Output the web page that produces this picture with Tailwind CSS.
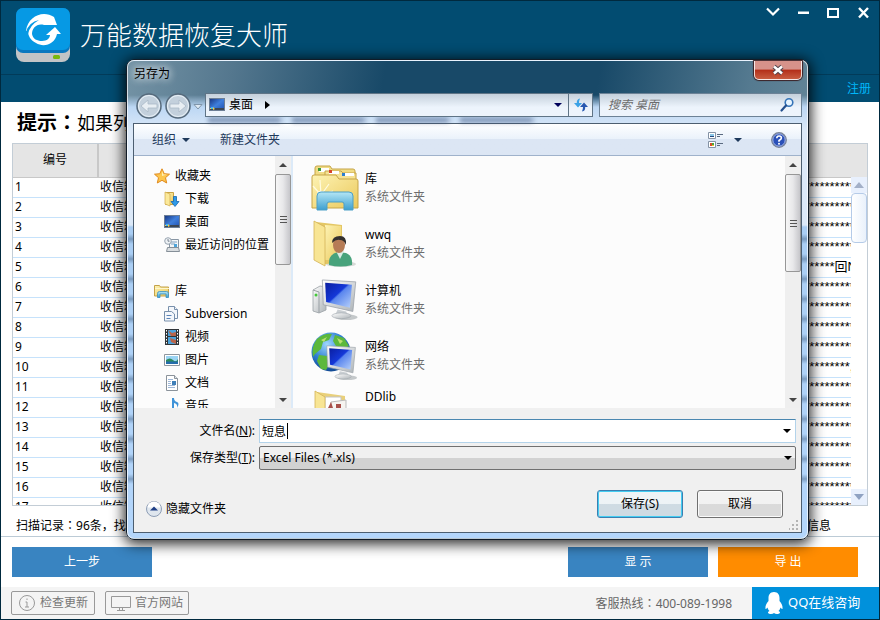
<!DOCTYPE html>
<html lang="zh-CN">
<head>
    <meta charset="UTF-8">
    <meta name="viewport" content="width=device-width, initial-scale=1.0">
    <title>万能数据恢复大师</title>
    <script src="https://cdn.jsdelivr.net/npm/@tailwindcss/browser@4"></script>
</head>
<body class="font-['Noto_Sans','Noto_Sans_CJK_SC',sans-serif] text-xs text-black bg-white">
    <!-- Shared icons -->
    <svg class="absolute h-0 w-0">
        <defs>
            <linearGradient id="gYellow" x1="0" y1="0" x2="1" y2="1"><stop offset="0" stop-color="#fdf3b4"/><stop offset="1" stop-color="#ebc95c"/></linearGradient>
            <linearGradient id="gBlue" x1="0" y1="0" x2="0" y2="1"><stop offset="0" stop-color="#b4e6f5"/><stop offset="1" stop-color="#3c9fd0"/></linearGradient>
            <linearGradient id="gScreen" x1="0" y1="0" x2="1" y2="1"><stop offset="0" stop-color="#0a1ea0"/><stop offset=".45" stop-color="#1438d8"/><stop offset=".5" stop-color="#5a86ee"/><stop offset="1" stop-color="#b8d2fa"/></linearGradient>
            <linearGradient id="gDesk" x1="0" y1="0" x2="1" y2="1"><stop offset="0" stop-color="#16337e"/><stop offset=".5" stop-color="#3f7fdc"/><stop offset="1" stop-color="#1f4fae"/></linearGradient>
            <linearGradient id="gSilver" x1="0" y1="0" x2="1" y2="1"><stop offset="0" stop-color="#ffffff"/><stop offset="1" stop-color="#aeb4b8"/></linearGradient>
            <radialGradient id="gGlobe" cx=".4" cy=".3" r=".7"><stop offset="0" stop-color="#9fd8ff"/><stop offset=".6" stop-color="#2c7cd0"/><stop offset="1" stop-color="#124a94"/></radialGradient>
            <symbol id="desktop" viewBox="0 0 16 14">
                <rect x=".5" y=".5" width="15" height="12" fill="url(#gDesk)" stroke="#6d7f96"/>
                <path d="M1 10h14v2H1z" fill="#3b4654"/>
                <path d="M1 10h2v1H1zM4 9l2 2-2 1z" fill="#f2d04a"/><path d="M2 9h2v2H2z" fill="#44b7f0"/>
            </symbol>
            <symbol id="monitor" viewBox="0 0 38 44">
                <ellipse cx="26" cy="40" rx="12" ry="3" fill="#c4c8ca"/>
                <path d="M17 32l9 2 2 5q-6 3-14 0z" fill="#c9ced2"/>
                <ellipse cx="21" cy="38.500" rx="10" ry="3" fill="url(#gSilver)" stroke="#9da4aa" stroke-width=".6"/>
                <path d="M1 1l35 2-3 31L2 27z" fill="url(#gSilver)" stroke="#9aa1a8" stroke-width=".8"/>
                <path d="M4 4l28 2-2 24L5 24z" fill="url(#gScreen)"/>
            </symbol>
        </defs>
    </svg>

    <div class="relative flex h-screen flex-col overflow-hidden border border-[#00293e]">
        <!-- Title bar -->
        <header class="shrink-0 bg-[#024c71] text-white">
            <div class="flex h-[74px] justify-between border-b border-[#023b59]">
                <div class="flex items-center gap-2.5 pb-1.5 pl-[15px]">
                    <svg class="h-[54px] w-[54px]" viewBox="0 0 54 54">
                        <rect y="8" width="54" height="46" rx="8" fill="#c2c4c6"/>
                        <rect width="54" height="45" rx="7" fill="#0a78bf"/>
                        <rect width="54" height="42" rx="7" fill="#0699e4"/>
                        <rect x="37" y="47" width="7" height="4" rx="1.500" fill="#77b80e"/>
                        <path d="M10 23C12 8 27 2 38 9l3 8H28c-7-2-12 3-12 9 1 5 5 7 10 7 5 0 8-3 8-6h-4l9-8 6 7h-4c-2 10-13 14-21 9-6-3-8-8-8-12z" fill="#fff"/>
                        <path d="M10 24q3-10 13-12-9 5-11 14z" fill="#0699e4"/>
                    </svg>
                    <h1 class="text-[26px] font-light leading-8">万能数据恢复大师</h1>
                </div>
                <div class="flex h-6 gap-3.5 pr-2">
                    <button type="button" aria-label="菜单" class="w-4"><svg class="h-6 w-4" viewBox="0 0 16 24" fill="none" stroke="#fff" stroke-width="2.200"><path d="M2 7.500l6 6 6-6"/></svg></button>
                    <button type="button" aria-label="最小化" class="w-4"><svg class="h-6 w-4" viewBox="0 0 16 24"><path d="M3 10.500h11V13H3z" fill="#fff"/></svg></button>
                    <button type="button" aria-label="最大化" class="w-4"><svg class="h-6 w-4" viewBox="0 0 16 24" fill="none" stroke="#fff" stroke-width="2"><rect x="3" y="8" width="10" height="8"/></svg></button>
                    <button type="button" aria-label="关闭" class="w-4"><svg class="h-6 w-4" viewBox="0 0 16 24" fill="none" stroke="#fff" stroke-width="2.400"><path d="M4 7l9 9.500M13 7l-9 9.500"/></svg></button>
                </div>
            </div>
            <div class="flex h-[27px] items-center justify-end pr-2">
                <a href="#" class="text-[#00b7fa]">注册</a>
            </div>
        </header>

        <!-- Scan results -->
        <main class="flex min-h-0 flex-1 flex-col">
            <p class="flex h-[41px] shrink-0 items-center overflow-hidden whitespace-nowrap pl-4 text-lg leading-6"><b class="text-xl">提示<span class="font-['Noto_Sans_CJK_TC']" lang="zh-TW">：</span></b>如果列表中</p>
            <div class="relative mx-[11px] min-h-0 flex-1 overflow-hidden border border-[#c3cdd6]">
                <table class="w-full table-fixed border-collapse">
                    <thead>
                        <tr class="h-[33px] border-b border-[#c8c8c8] bg-[#e5e5e5]">
                            <th class="w-[85px] border-r-2 border-[#c8c8c8] font-normal">编号</th>
                            <th class="w-[600px] font-normal"></th>
                            <th class="font-normal"></th>
                        </tr>
                    </thead>
                    <tbody id="records"></tbody>
                </table>
                <div class="absolute bottom-0 right-0 top-[33px] flex w-4 flex-col bg-white">
                    <div class="flex h-4 items-center justify-center bg-[#e8f0fd]"><svg class="h-2 w-3" viewBox="0 0 12 8"><path d="M1 7l5-6 5 6z" fill="#a3b0c8"/></svg></div>
                    <div class="h-[50px] rounded-sm border border-[#b5cbe8] bg-linear-to-r from-white to-[#e9f1fb]"></div>
                    <div class="mt-auto flex h-4 items-center justify-center bg-[#e8f0fd]"><svg class="h-2 w-3" viewBox="0 0 12 8"><path d="M1 1l5 6 5-6z" fill="#8fa2c2"/></svg></div>
                </div>
            </div>
            <div class="flex h-[31px] shrink-0 items-end justify-between border-b border-[#bccbd6] pb-0.5 pl-[15px] pr-12 leading-4">
                <span>扫描记录<span class="font-['Noto_Sans_CJK_TC']" lang="zh-TW">：</span>96条，找到</span>
                <span>信息</span>
            </div>
            <div class="flex h-[50px] shrink-0 items-center gap-2.5 pl-[11px] pr-[21px] text-white">
                <button type="button" class="h-[30px] w-[140px] bg-[#3984c1]">上一步</button>
                <button type="button" class="ml-auto h-[30px] w-[140px] bg-[#3984c1]">显 示</button>
                <button type="button" class="h-[30px] w-[140px] bg-[#ff8c00]">导 出</button>
            </div>
        </main>

        <!-- Footer -->
        <footer class="flex h-8 shrink-0 items-center gap-2.5 bg-[#f4f4f4] pl-2.5 text-[#666]">
            <button type="button" class="flex h-6 w-[84px] items-center justify-center gap-1 rounded-xs border border-[#999] text-[#777]">
                <svg class="h-[18px] w-[18px]" viewBox="0 0 18 18" fill="none" stroke="#999"><circle cx="9" cy="9" r="7.500"/><path d="M9 4.500v1.500M7.500 8H9v5M7 13h4"/></svg>
                检查更新
            </button>
            <button type="button" class="flex h-6 w-[84px] items-center justify-center gap-1 rounded-xs border border-[#999] text-[#777]">
                <svg class="h-[18px] w-5" viewBox="0 0 20 18" fill="none" stroke="#999"><path d="M.5 2.500h19v11H.5zM8.500 14v2M11.500 14v2M6 16.500h8"/></svg>
                官方网站
            </button>
            <span class="ml-auto mr-2.5">客服热线<span class="font-['Noto_Sans_CJK_TC']" lang="zh-TW">：</span>400-089-1998</span>
            <a href="#" class="flex h-full w-[127px] items-center gap-1 bg-[#0091dc] pl-3 text-[13px] text-white">
                <svg class="h-[22px] w-5" viewBox="0 0 20 22" fill="#fff"><path d="M10 0C6 0 4.500 3 4.500 6v3C2.500 11 1 14 1.500 17c.8 0 1.400-.7 2-1.500.3 1.500 1 2.500 2 3.500-3 1.500-1 3 1.500 3q2 0 3-1 1 1 3 1c2.500 0 4.500-1.500 1.500-3 1-1 1.700-2 2-3.500.6.800 1.200 1.500 2 1.500.5-3-1-6-3-8V6c0-3-1.500-6-5.500-6z"/></svg>
                QQ在线咨询
            </a>
        </footer>

        <!-- Save As dialog -->
        <section role="dialog" aria-labelledby="dlgTitle" class="absolute left-[125px] right-[70px] top-[58px] rounded-lg border border-[#111c28] bg-[linear-gradient(100deg,#7493a5_0%,#54778e_14%,#184968_34%,#184968_62%,#557a90_82%,#71909f_100%)] shadow-[0_2px_14px_2px_rgba(0,0,0,0.85)]">
            <div class="rounded-[7px] border border-white/70 bg-[linear-gradient(to_bottom,transparent_34px,#bcd7f4_46px,#dce9f8_70px,#dce9f8_164px,#a9cdf3_166px,#b4d6fb_100%)]">
                <div class="bg-[repeating-linear-gradient(to_bottom,transparent_0_5px,rgba(60,90,125,0.45)_10px,transparent_15px_20px)] bg-[size:100%_260px] bg-[position:0_168px] bg-no-repeat px-[5px] pb-[5px]">
                    <div class="flex h-[32px] items-start justify-between">
                        <h2 id="dlgTitle" class="rounded-lg pt-[3px] pl-px leading-5 [text-shadow:0_0_8px_#fff,0_0_8px_#fff]">另存为</h2>
                        <button type="button" aria-label="关闭" class="flex h-[19px] w-12 items-center justify-center rounded-b-[5px] border border-t-0 border-white/80 bg-linear-to-b from-[#d6928a] from-45% via-[#b32d18] via-50% to-[#c85c40] shadow-[0_0_1px_1px_#3b2024]">
                            <svg class="h-3 w-3" viewBox="0 0 12 12"><path d="M2 2.500l8 7M10 2.500l-8 7" stroke="#50444c" stroke-width="4.500"/><path d="M2 2.500l8 7M10 2.500l-8 7" stroke="#fff" stroke-width="2.500"/></svg>
                        </button>
                    </div>

                    <!-- Address bar -->
                    <div class="relative flex h-[30px] items-start">
                        <div class="absolute left-[75px] right-[260px] top-6 h-1.5 bg-[repeating-linear-gradient(to_right,rgba(50,75,120,0.45)_0_70px,transparent_76px_84px)] blur-[2px]"></div>
                        <button type="button" aria-label="后退" class="ml-[3px]"><svg class="h-[26px] w-[26px]" viewBox="0 0 26 26"><circle cx="13" cy="13" r="12" fill="#c3d0dc" stroke="#566a7c" stroke-width="1.500"/><circle cx="13" cy="13" r="10.500" fill="none" stroke="#e9f1f7"/><path d="M5 13l7-6v4h9v4h-9v4z" fill="#e8eef3" stroke="#a9b9c7" stroke-width=".8"/></svg></button>
                        <button type="button" aria-label="前进" class="ml-[3px]"><svg class="h-[26px] w-[26px]" viewBox="0 0 26 26"><circle cx="13" cy="13" r="12" fill="#c3d0dc" stroke="#566a7c" stroke-width="1.500"/><circle cx="13" cy="13" r="10.500" fill="none" stroke="#e9f1f7"/><path d="M21 13l-7-6v4H5v4h9v4z" fill="#e8eef3" stroke="#a9b9c7" stroke-width=".8"/></svg></button>
                        <svg class="mx-0.5 mt-2.5 h-2 w-2.5" viewBox="0 0 10 8"><path d="M1 1.500h8L5 6z" fill="#dfeaf4" stroke="#7f95aa"/></svg>
                        <div class="relative flex h-6 flex-1 items-center border border-[#5f7486] bg-linear-to-b from-[#c4d0db] to-[#edf4fc] to-60% pl-[3px]">
                            <svg class="h-3.5 w-4"><use href="#desktop"/></svg>
                            <span class="ml-1">桌面</span>
                            <svg class="ml-3 h-2 w-1.5" viewBox="0 0 6 8"><path d="M0 0l5 4-5 4z"/></svg>
                            <button type="button" aria-label="以前的位置" class="ml-auto mr-1.5"><svg class="h-1.5 w-2" viewBox="0 0 8 6"><path d="M0 1h8L4 5z" fill="#00005a"/></svg></button>
                            <button type="button" aria-label="刷新" class="flex h-full w-6 items-center justify-center border-l border-[#5f7486]">
                                <svg class="h-4 w-4" viewBox="0 0 16 16"><path d="M7 1.500Q3.500 2 3.800 6H1l4 4.500L9 6H6Q6 3.500 7 1.500z" fill="#3aa2e6"/><path d="M9 14.500q3.500-.5 3.200-4.500H15l-4-4.500L7 10h3q0 2.500-1 4.500z" fill="#2858b0"/></svg>
                            </button>
                        </div>
                        <label class="ml-1.5 flex h-6 w-[203px] items-center border border-[#6c8296] bg-linear-to-b from-[#c4d0db] to-[#edf4fc] to-60% pl-2 pr-1.5">
                            <input type="search" aria-label="搜索 桌面" placeholder="搜索 桌面" class="w-0 flex-1 bg-transparent italic outline-none placeholder:text-[#6d6d6d]">
                            <svg class="h-4 w-4" viewBox="0 0 16 16" fill="none"><circle cx="10" cy="5.500" r="3.800" fill="#e6f4ff" stroke="#3574b8" stroke-width="1.600"/><path d="M7 8.500l-4.500 5" stroke="#24508e" stroke-width="2.200" stroke-linecap="round"/></svg>
                        </label>
                    </div>

                    <div class="border border-[#4c5e70] bg-[#f0f0f0]">
                        <!-- Command bar -->
                        <div class="flex h-8 items-center border-b border-[#9fb2cb] bg-linear-to-b from-white via-[#eaf2fb] via-48% to-[#dce6f4] to-50% pl-[18px] pr-3.5 text-[#1e395b]">
                            <button type="button" class="flex items-center gap-1.5">组织<svg class="h-1.5 w-2" viewBox="0 0 8 6"><path d="M0 1h8L4 5z" fill="#1e395b"/></svg></button>
                            <button type="button" class="ml-[30px]">新建文件夹</button>
                            <button type="button" aria-label="更改视图" class="ml-auto flex items-center gap-2.5">
                                <svg class="h-4 w-4" viewBox="0 0 16 16"><path d="M.5.500h7v6h-7zM.5 9.500h7v6h-7z" fill="#fff" stroke="#8492a4"/><path d="M2 2h4v3H2z" fill="#89c6e8"/><path d="M2 4h4v1H2z" fill="#25477a"/><path d="M2 11h2v3H2z" fill="#d84a2a"/><path d="M4 11h2v2H4z" fill="#47a83a"/><path d="M4 13h2v1H4z" fill="#e8c030"/><path d="M9 2.500h6M9 4.500h3M9 11.500h6M9 13.500h3" stroke="#5a6a80"/></svg>
                                <svg class="h-1.5 w-2" viewBox="0 0 8 6"><path d="M0 1h8L4 5z" fill="#1e395b"/></svg>
                            </button>
                            <button type="button" aria-label="帮助" class="ml-[29px]">
                                <svg class="h-4 w-4" viewBox="0 0 16 16"><circle cx="8" cy="8" r="7.300" fill="#2a50b8" stroke="#7b8494" stroke-width="1.200"/><circle cx="8" cy="8" r="6.200" fill="none" stroke="#c6d2ee" stroke-width=".8"/><path d="M5.800 6.200q0-2.200 2.300-2.200t2.300 2Q10.400 7.300 8 8.500v1.200" fill="none" stroke="#fff" stroke-width="1.600"/><circle cx="8" cy="11.800" r="1" fill="#fff"/></svg>
                            </button>
                        </div>

                        <!-- Folder panes -->
                        <div class="flex h-[252px] bg-[#fcfcfc]">
                            <nav class="flex w-[159px] shrink-0 border-r-2 border-[#dceaf8]">
                                <ul class="w-[141px] shrink-0 overflow-hidden whitespace-nowrap pl-5 pt-2 leading-[23px]">
                                    <li class="flex h-[23px] items-center gap-[5px]">
                                        <svg class="h-4 w-4" viewBox="0 0 16 16"><path d="M8 .8l2.200 4.900 5.300.5-4 3.500 1.200 5.300L8 12.300 3.300 15l1.200-5.300-4-3.500 5.300-.5z" fill="#fdc64d" stroke="#e08a1e" stroke-linejoin="round"/><path d="M8 3l1.300 3.600H13L8 8z" fill="#fff0b8"/></svg>
                                        收藏夹
                                    </li>
                                    <li class="flex h-[23px] items-center gap-[5px] pl-2.5">
                                        <svg class="h-4 w-4" viewBox="0 0 16 16"><path d="M1.500 1.500h8v12h-8z" fill="url(#gYellow)" stroke="#c9a344"/><path d="M1 1l5 2v12l-5-2z" fill="#fbe99a" stroke="#d0ab4c" stroke-width=".7"/><path d="M9.500 5.500h3v5H15l-4 5-4-5h2.500z" fill="#2e9ae8" stroke="#1566b0" stroke-width=".8"/></svg>
                                        下载
                                    </li>
                                    <li class="flex h-[23px] items-center gap-[5px] pl-2.5"><svg class="h-3.5 w-4"><use href="#desktop"/></svg>桌面</li>
                                    <li class="flex h-[23px] items-center gap-[5px] pl-2.5">
                                        <svg class="h-4 w-4 shrink-0" viewBox="0 0 16 16"><path d="M5.500 2.500h9v9h-9z" fill="#f3f6f8" stroke="#8896a4"/><path d="M7 5h6M7 7h4" stroke="#7fa0c0"/><path d="M10 7h3v3h-3z" fill="#4da3d8"/><path d="M3.500 10.500h11l1 4h-13z" fill="#d9dde0" stroke="#858f98"/><circle cx="4" cy="4" r="3.300" fill="#eef2f5" stroke="#98a4b0"/><path d="M4 2v2.200h1.500" fill="none" stroke="#5d6a78" stroke-width=".8"/></svg>
                                        最近访问的位置
                                    </li>
                                    <li class="mt-[23px] flex h-[23px] items-center gap-[5px]">
                                        <svg class="h-4 w-4" viewBox="0 0 16 16"><path d="M.5 2.500h5l1 1.500h8v9H.5z" fill="url(#gYellow)" stroke="#c4a24a"/><path d="M1 5.500h14" stroke="#fff6cc"/><path d="M3.500 14.500v-4q0-2 2-2h7q2 0 2 2v4H12V11H6v3.500z" fill="url(#gBlue)" stroke="#3a8fc0" stroke-width=".8"/></svg>
                                        库
                                    </li>
                                    <li class="flex h-[23px] items-center gap-[5px] pl-2.5">
                                        <svg class="h-4 w-4" viewBox="0 0 16 16" fill="#f4f7fb" stroke="#7890ac"><path d="M4.500.5h6l3 3v9h-9z"/><path d="M10.500.5v3h3"/><path d="M.5 5.500h7l3 2.500v7H.5z"/><path d="M2.500 9.500h5M2.500 12.500h4" stroke="#5a83b8"/></svg>
                                        Subversion
                                    </li>
                                    <li class="flex h-[23px] items-center gap-[5px] pl-2.5">
                                        <svg class="h-4 w-4" viewBox="0 0 16 16"><path d="M1 0h14v16H1z" fill="#2f3438"/><path d="M4 1h8v6H4zM4 8h8v7H4z" fill="#4ba2dc"/><path d="M4 1l4 3 4-1v4H7zM6 9l6 2v4l-5-2z" fill="#b8644a"/><path d="M2.500 1v15M13.500 1v15" stroke="#fff" stroke-dasharray="1.500 1.500"/></svg>
                                        视频
                                    </li>
                                    <li class="flex h-[23px] items-center gap-[5px] pl-2.5">
                                        <svg class="h-4 w-4" viewBox="0 0 16 16"><path d="M.5 2.500h15v11H.5z" fill="#fff" stroke="#8e969e"/><path d="M2 4h12v8H2z" fill="#9bd4f4"/><path d="M2 8q4-3 7 0t5-1v3H2z" fill="#2d8a5c"/><path d="M2 9.500h12V12H2z" fill="#246cab"/></svg>
                                        图片
                                    </li>
                                    <li class="flex h-[23px] items-center gap-[5px] pl-2.5">
                                        <svg class="h-4 w-4" viewBox="0 0 16 16"><path d="M2.500.5h8l3 3v12h-11z" fill="#fff" stroke="#8b939b"/><path d="M10.500.5v3h3" fill="#e0e6ec" stroke="#8b939b"/><path d="M4 4.500h5M4 6.500h3M4 8.500h3M4 10.500h7M4 12.500h7" stroke="#9fb8d8"/><path d="M8 6h4v4H8z" fill="#3f7fb8"/></svg>
                                        文档
                                    </li>
                                    <li class="flex h-[23px] items-center gap-[5px] pl-2.5">
                                        <svg class="h-4 w-4" viewBox="0 0 16 16" fill="#3f93d8"><path d="M8 0h2q0 3 3 4t0 6q1-4-3-5v8H8z"/><ellipse cx="7" cy="13" rx="3" ry="2.500"/></svg>
                                        音乐
                                    </li>
                                </ul>
                                <div class="flex w-4 flex-col bg-[#efefef]">
                                    <div class="flex h-[18px] items-center justify-center"><svg class="h-1 w-2" viewBox="0 0 8 4"><path d="M0 4h8L4 0z" fill="#444"/></svg></div>
                                    <div class="flex h-[91px] flex-col items-center justify-center gap-0.5 rounded-xs border border-[#979797] bg-linear-to-r from-[#f6f6f6] via-[#e8e8ea] to-[#c6c6ca]">
                                        <i class="h-px w-[7px] bg-[#555]"></i><i class="h-px w-[7px] bg-[#555]"></i><i class="h-px w-[7px] bg-[#555]"></i>
                                    </div>
                                    <div class="mt-auto flex h-4 items-center justify-center"><svg class="h-1 w-2" viewBox="0 0 8 4"><path d="M0 0h8L4 4z" fill="#444"/></svg></div>
                                </div>
                            </nav>

                            <ul class="min-w-0 flex-1 overflow-hidden pl-[18px] pt-1 leading-[18px]">
                                <li class="flex h-14 items-center gap-1">
                                    <svg class="h-12 w-12" viewBox="0 0 48 48">
                                        <path d="M4 10V4q0-2 2-2h13l2 3h21q2 0 2 2v8H4z" fill="#f1dc85" stroke="#c6a548"/><path d="M8 4h10v4H8z" fill="#fff"/><path d="M7 4h3v3H7z" fill="#3d9a3a"/>
                                        <path d="M14 12V7h16l2 2h13v8H14z" fill="#f5e295" stroke="#c6a548"/><path d="M18 7h10v3H18z" fill="#fff"/><path d="M18 6h3v3h-3z" fill="#d8432a"/>
                                        <path d="M1 13q0-2 2-2h22l3 4h17q2 0 2 2v27H1z" fill="url(#gYellow)" stroke="#c6a548"/>
                                        <path d="M31 9h12v3H31z" fill="#fff"/><path d="M31 9h3v3h-3z" fill="#2d7fd0"/>
                                        <path d="M10 31l-8-9M10 31L9 16M10 31l8-11M10 31l12-4" stroke="#fffbe0" stroke-width="1.200"/><circle cx="10" cy="31" r="4" fill="#fff" opacity=".8"/>
                                        <path d="M6 46V32q0-4 4-4h28q4 0 4 4v14h-9v-6q0-2-2-2H18q-2 0-2 2v6z" fill="url(#gBlue)" stroke="#4c9fc6"/>
                                    </svg>
                                    <div class="pl-0.5"><p>库</p><p class="text-[#6d6d6d]">系统文件夹</p></div>
                                </li>
                                <li class="flex h-14 items-center gap-1">
                                    <svg class="h-12 w-12" viewBox="0 0 48 48">
                                        <ellipse cx="30" cy="44" rx="15" ry="3" fill="#d8dad8"/><path d="M5 2l26 3v36l-20 4z" fill="#e4c765"/><path d="M14 5l16 1v34H14z" fill="url(#gYellow)"/>
                                        <path d="M3 1l11 6v39L3 40z" fill="#f8e594" stroke="#d3b357" stroke-width=".8"/>
                                        <path d="M18 45q-1-11 9-13l8 1q7 3 6 12-12 3-23 0z" fill="#48a37c"/><path d="M25 31l4 8 4-8z" fill="#d8ece4"/>
                                        <ellipse cx="28" cy="25" rx="6" ry="8" fill="#b67c56"/><path d="M21 23q0-7 8-7 7 0 6 9-2-5-6-5-4-1-8 3z" fill="#33302e"/>
                                    </svg>
                                    <div class="pl-0.5"><p>wwq</p><p class="text-[#6d6d6d]">系统文件夹</p></div>
                                </li>
                                <li class="flex h-14 items-center gap-1">
                                    <svg class="h-12 w-12" viewBox="0 0 48 48">
                                        <path d="M2 14l7-4 6 1v23l-7 3-6-2z" fill="url(#gSilver)" stroke="#9ba1a6" stroke-width=".8"/><path d="M2 14l6 2v21" fill="none" stroke="#9ba1a6"/><circle cx="5" cy="19" r="1.500" fill="#44c83a"/>
                                        <svg x="10" y="3" width="37" height="42"><use href="#monitor"/></svg>
                                    </svg>
                                    <div class="pl-0.5"><p>计算机</p><p class="text-[#6d6d6d]">系统文件夹</p></div>
                                </li>
                                <li class="flex h-14 items-center gap-1">
                                    <svg class="h-12 w-12" viewBox="0 0 48 48">
                                        <circle cx="20" cy="20" r="19.500" fill="url(#gGlobe)"/>
                                        <path d="M6 7q7-6 15-5l-3 6-6 2-2 7-6 5-2 3q-2-10 4-18zM8 23l8 1 4 6-5 8-5-1-4-8zM24 3l9 3 5 8-6 3-7-3-3-5z" fill="#5cb83c"/><path d="M10 8l6-3-3 5zM26 6l6 3-3 3z" fill="#b8e070"/>
                                        <svg x="14" y="13" width="33" height="36"><use href="#monitor"/></svg>
                                    </svg>
                                    <div class="pl-0.5"><p>网络</p><p class="text-[#6d6d6d]">系统文件夹</p></div>
                                </li>
                                <li class="flex h-14 items-start gap-1 pt-1">
                                    <svg class="h-12 w-12" viewBox="0 0 48 48">
                                        <path d="M6 4l28 4v36H14z" fill="#e9d07a"/><path d="M14 9h16v30H14z" fill="#fff" stroke="#c5c5c5"/><path d="M20 14l15-2v30H20z" fill="#f6f4f0" stroke="#bbb"/><path d="M17 20l3-6 2 6zM25 16h5v5h-5z" fill="#a8504a"/><path d="M4 3l10 6v37L4 40z" fill="#f8e594" stroke="#d3b357" stroke-width=".8"/>
                                    </svg>
                                    <div class="pl-0.5"><p>DDlib</p></div>
                                </li>
                            </ul>
                            <div class="flex w-4 flex-col bg-[#efefef]">
                                <div class="flex h-[18px] items-center justify-center"><svg class="h-1 w-2" viewBox="0 0 8 4"><path d="M0 4h8L4 0z" fill="#444"/></svg></div>
                                <div class="flex h-[98px] flex-col items-center justify-center gap-0.5 rounded-xs border border-[#979797] bg-linear-to-r from-[#f6f6f6] via-[#e8e8ea] to-[#c6c6ca]">
                                    <i class="h-px w-[7px] bg-[#555]"></i><i class="h-px w-[7px] bg-[#555]"></i><i class="h-px w-[7px] bg-[#555]"></i>
                                </div>
                                <div class="mt-auto flex h-4 items-center justify-center"><svg class="h-1 w-2" viewBox="0 0 8 4"><path d="M0 0h8L4 4z" fill="#444"/></svg></div>
                            </div>
                        </div>

                        <!-- File name and type -->
                        <form class="relative pl-3 pr-[5px] pt-[11px]" onsubmit="return false">
                            <div class="flex h-6 items-center gap-1">
                                <label for="fileName" class="w-[109px] text-right">文件名(<u>N</u>):</label>
                                <div class="flex h-6 flex-1 items-center border border-[#b3d3ea] border-t-[#4a87b0] bg-white pr-1">
                                    <input id="fileName" type="text" value="短息" class="h-full w-[27px] bg-transparent pl-0.5 outline-none">
                                    <i class="h-4 w-px bg-black"></i>
                                    <svg class="ml-auto h-1.5 w-2" viewBox="0 0 8 6"><path d="M0 1h8L4 5z"/></svg>
                                </div>
                            </div>
                            <div class="mt-[3px] flex h-6 items-center gap-1">
                                <label for="fileType" class="w-[109px] text-right">保存类型(<u>T</u>):</label>
                                <div class="relative flex-1">
                                    <select id="fileType" class="block h-6 w-full appearance-none rounded-xs border border-[#707070] bg-linear-to-b from-[#f0f0f0] from-48% to-[#d2d2d2] to-52% pl-[3px]">
                                        <option>Excel Files (*.xls)</option>
                                    </select>
                                    <svg class="pointer-events-none absolute right-1 top-[9px] h-1.5 w-2" viewBox="0 0 8 6"><path d="M0 1h8L4 5z"/></svg>
                                </div>
                            </div>
                            <div class="flex h-[62px] items-center gap-3.5 pr-[13px] pt-1.5">
                                <button type="button" class="mr-auto mt-2.5 flex items-center gap-1">
                                    <svg class="h-4 w-4" viewBox="0 0 16 16"><circle cx="8" cy="8" r="7.500" fill="#dfe6ee" stroke="#8d9db5"/><path d="M1.500 6.500a6.500 6 0 0113 0z" fill="#fff"/><path d="M4 9.500h8l-4-4z" fill="#1f3f86"/></svg>
                                    隐藏文件夹
                                </button>
                                <button type="submit" class="h-7 w-[86px] rounded-[3px] border border-[#3c7fb1] bg-linear-to-b from-[#eef3f6] from-48% to-[#cfdbe3] to-52% shadow-[inset_0_0_0_1px_#43cdf2]">保存(S)</button>
                                <button type="button" class="h-7 w-[86px] rounded-[3px] border border-[#707070] bg-linear-to-b from-[#f2f2f2] from-48% to-[#dadada] to-52% shadow-[inset_0_0_0_1px_#fafafa]">取消</button>
                            </div>
                            <svg class="absolute bottom-0.5 right-0.5 h-2.5 w-2.5" viewBox="0 0 10 10" fill="#b4b4b4"><path d="M7 0h2v2H7zM7 4h2v2H7zM3 4h2v2H3zM7 8h2v2H7zM3 8h2v2H3zM0 8h1v2H0z"/></svg>
                        </form>
                    </div>
                </div>
            </div>
        </section>
    </div>

    <script>
        const body = document.getElementById('records');
        for (let i = 1; i <= 17; i++) {
            let text = '*'.repeat(40);
            if (i === 5) text = '*'.repeat(27) + '回N';
            if (i === 10) text = '*'.repeat(30) + ',';
            body.innerHTML += `
                <tr class="h-5 border-b border-[#c6e2fb] leading-4">
                    <td class="pl-0.5">${i}</td>
                    <td class="pl-0.5">收信箱</td>
                    <td class="overflow-hidden whitespace-nowrap font-['Liberation_Sans','Noto_Sans_CJK_SC',sans-serif] text-[13px]">${text}</td>
                </tr>`;
        }
    </script>
</body>
</html>
